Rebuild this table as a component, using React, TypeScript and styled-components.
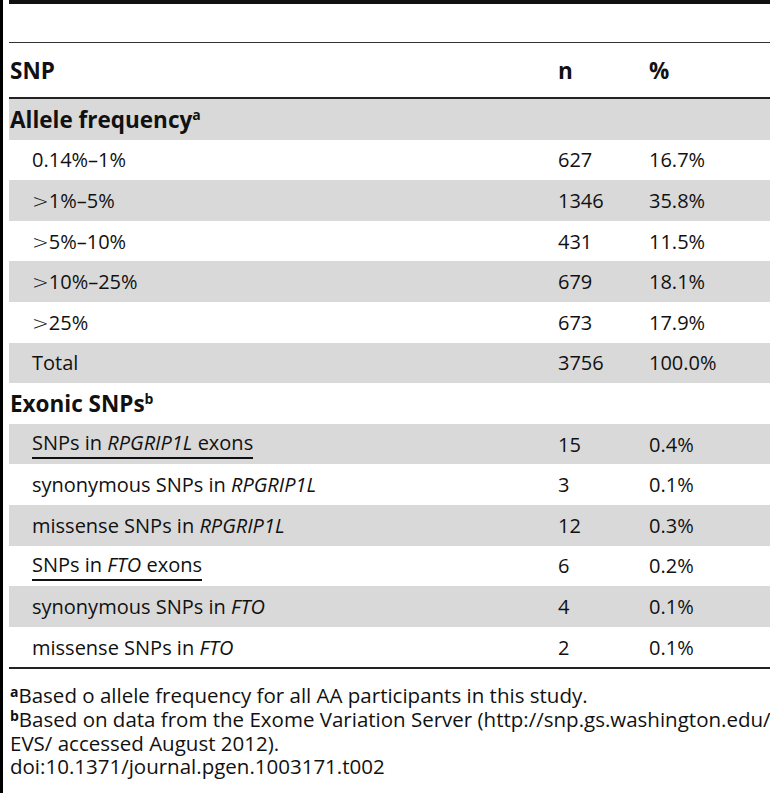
import React from 'react';
import styled, { createGlobalStyle } from 'styled-components';

const GlobalStyle = createGlobalStyle`
  body {
    margin: 0;
    background: #fff;
    color: #111;
    font-family: "Open Sans", "Noto Sans", sans-serif;
  }
`;

const Page = styled.div`
  width: 770px;
  height: 793px;
  overflow: hidden;
  box-sizing: border-box;
  border-left: 3px solid #000;
  padding-left: 6px;
`;

const Table = styled.div`
  width: 761px;
  border-top: 4px solid #111;
`;

const Caption = styled.div`
  height: 38px;
  border-bottom: 1.5px solid #333;
`;

const Grid = styled.div<{ $bg?: boolean; $h: number; $rule?: boolean }>`
  display: grid;
  grid-template-columns: 548px 91px 1fr;
  align-items: center;
  height: ${p => p.$h}px;
  background: ${p => (p.$bg ? '#d9d9d9' : '#fff')};
  border-bottom: ${p => (p.$rule ? '2px solid #222' : 'none')};
  font-size: 20px;
`;

const Cell = styled.div<{ $indent?: boolean; $bold?: boolean }>`
  padding-left: ${p => (p.$indent ? '23px' : '1px')};
  font-weight: ${p => (p.$bold ? 700 : 400)};
  font-size: ${p => (p.$bold ? '22.5px' : '20px')};
  white-space: nowrap;
`;

const Sup = styled.sup`
  font-size: 14px;
  font-weight: 700;
  vertical-align: 8px;
  line-height: 0;
`;

const Gt = styled.span`
  font-family: "DejaVu Sans", sans-serif;
  font-weight: 200;
  font-size: 20px;
`;

const Gene = styled.i``;

const Subtotal = styled.span`
  display: inline-block;
  line-height: 22px;
  padding-bottom: 3px;
  border-bottom: 2.5px solid #111;
`;

const Notes = styled.div`
  margin-top: 15px;
  padding-left: 1px;
  font-size: 20.5px;
  line-height: 23.7px;
  white-space: nowrap;
`;

const NoteMark = styled.sup`
  font-size: 14px;
  font-weight: 700;
  vertical-align: 6px;
  line-height: 0;
`;

type Row = {
  label: React.ReactNode;
  n?: string;
  pct?: string;
  heading?: boolean;
};

const rows: Row[] = [
  { label: <>Allele frequency<Sup>a</Sup></>, heading: true },
  { label: '0.14%–1%', n: '627', pct: '16.7%' },
  { label: <><Gt>&gt;</Gt>1%–5%</>, n: '1346', pct: '35.8%' },
  { label: <><Gt>&gt;</Gt>5%–10%</>, n: '431', pct: '11.5%' },
  { label: <><Gt>&gt;</Gt>10%–25%</>, n: '679', pct: '18.1%' },
  { label: <><Gt>&gt;</Gt>25%</>, n: '673', pct: '17.9%' },
  { label: 'Total', n: '3756', pct: '100.0%' },
  { label: <>Exonic SNPs<Sup>b</Sup></>, heading: true },
  { label: <Subtotal>SNPs in <Gene>RPGRIP1L</Gene> exons</Subtotal>, n: '15', pct: '0.4%' },
  { label: <>synonymous SNPs in <Gene>RPGRIP1L</Gene></>, n: '3', pct: '0.1%' },
  { label: <>missense SNPs in <Gene>RPGRIP1L</Gene></>, n: '12', pct: '0.3%' },
  { label: <Subtotal>SNPs in <Gene>FTO</Gene> exons</Subtotal>, n: '6', pct: '0.2%' },
  { label: <>synonymous SNPs in <Gene>FTO</Gene></>, n: '4', pct: '0.1%' },
  { label: <>missense SNPs in <Gene>FTO</Gene></>, n: '2', pct: '0.1%' },
];

const App = () => {
  return (
    <Page>
      <GlobalStyle />
      <Table>
        <Caption />
        <Grid $h={54} $rule>
          <Cell $bold>SNP</Cell>
          <Cell $bold>n</Cell>
          <Cell $bold>%</Cell>
        </Grid>
        {rows.map((r, i) => (
          <Grid key={i} $h={40.6} $bg={i % 2 === 0} $rule={i === rows.length - 1}>
            <Cell $indent={!r.heading} $bold={r.heading}>
              {r.label}
            </Cell>
            <Cell>{r.n}</Cell>
            <Cell>{r.pct}</Cell>
          </Grid>
        ))}
      </Table>
      <Notes>
        <NoteMark>a</NoteMark>Based o allele frequency for all AA participants in this study.
        <br />
        <NoteMark>b</NoteMark>Based on data from the Exome Variation Server (http://snp.gs.washington.edu/
        <br />
        EVS/ accessed August 2012).
        <br />
        doi:10.1371/journal.pgen.1003171.t002
      </Notes>
    </Page>
  );
};

export default App;
